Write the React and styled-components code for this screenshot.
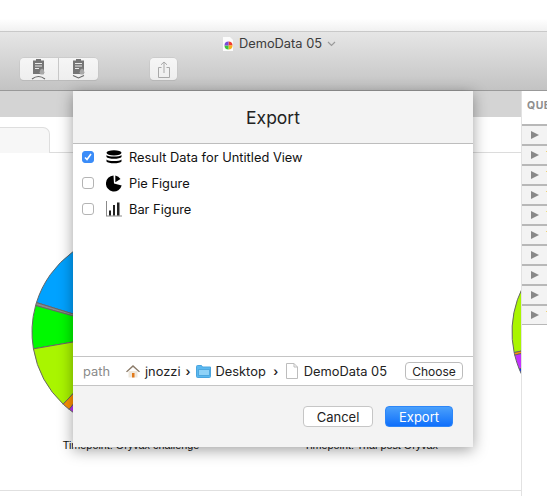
import React from 'react';
import styled, { createGlobalStyle } from 'styled-components';

const GlobalStyle = createGlobalStyle`
  html, body {
    margin: 0;
    padding: 0;
    background: #fff;
  }

  body {
    font-family: Inter, "Liberation Sans", sans-serif;
    color: #1c1c1c;
  }
`;

const LEFT_PIE = [
  { from: 0, to: 72.7, color: '#00a2ff' },
  { from: 72.7, to: 74.5, color: '#8a8a8a' },
  { from: 74.5, to: 99.8, color: '#00f900' },
  { from: 99.8, to: 136.8, color: '#a9f500' },
  { from: 136.8, to: 141.4, color: '#ff9300' },
  { from: 141.4, to: 147, color: '#c331ff' },
  { from: 147, to: 360, color: '#0433ff' },
];

const MIDDLE_PIE = [
  { from: 0, to: 80, color: '#00a2ff' },
  { from: 80, to: 140, color: '#a9f500' },
  { from: 140, to: 360, color: '#0433ff' },
];

const RIGHT_PIE = [
  { from: 0, to: 40, color: '#00a2ff' },
  { from: 40, to: 102, color: '#a9f500' },
  { from: 102, to: 103.5, color: '#ff9300' },
  { from: 103.5, to: 112, color: '#c331ff' },
  { from: 112, to: 360, color: '#0433ff' },
];

// angles run counter clockwise, starting at the top of the circle
const slicePath = (from, to) => {
  const point = (deg) => {
    const rad = (deg * Math.PI) / 180;
    return `${(100 - 99 * Math.sin(rad)).toFixed(2)} ${(100 - 99 * Math.cos(rad)).toFixed(2)}`;
  };
  const large = to - from > 180 ? 1 : 0;
  return `M100 100 L${point(from)} A99 99 0 ${large} 0 ${point(to)} Z`;
};

const Pie = ({ slices }) => (
  <svg width="200" height="200" viewBox="0 0 200 200">
    {slices.map((s) => (
      <path key={s.from} d={slicePath(s.from, s.to)} fill={s.color} stroke="#666" strokeWidth="1" />
    ))}
  </svg>
);

const ClipboardIcon = ({ down }) => (
  <svg width="16" height="22" viewBox="0 0 16 22">
    <path d="M2 2.500h3V1h5v1.500h3V16H2z" fill="#757575" />
    <path d="M4 5h7v1H4zM4 7.500h7v1H4zM4 10h4v1H4z" fill="#e8e8e8" />
    <path d="M9.500 11.500l1.500-1 1.500 1 1 3-1 2h-3l-1-2z" fill="#a8a8a8" />
    {down ? (
      <path d="M2 17.500 7.500 20 13 17.500" fill="none" stroke="#666" strokeWidth="1.100" />
    ) : (
      <path d="M1 21Q7.500 16 14 21" fill="none" stroke="#666" strokeWidth="1.100" />
    )}
  </svg>
);

const ShareIcon = () => (
  <svg width="12" height="17" viewBox="0 0 12 17" fill="none" stroke="#a9a9a9" strokeWidth="1">
    <path d="M3.500 6.500H.5v10h11v-10h-3" />
    <path d="M6 12V1M3 3.800 6 1l3 2.800" />
  </svg>
);

const DocColorIcon = () => (
  <svg width="12" height="14" viewBox="0 0 12 14">
    <path d="M1 0h7l3 3v11H1z" fill="#fbfbfb" />
    <path d="M6.500 4.500a4 4 0 0 1 4 4h-4z" fill="#f03b2e" />
    <path d="M10.500 8.500a4 4 0 0 1-4 4v-4z" fill="#f6b21b" />
    <path d="M6.500 12.500a4 4 0 0 1-4-4h4z" fill="#3ec23a" />
    <path d="M2.500 8.500a4 4 0 0 1 4-4v4z" fill="#7a4bd8" />
  </svg>
);

const DatabaseIcon = () => (
  <svg width="16" height="14" viewBox="0 0 16 14">
    <ellipse cx="8" cy="2.800" rx="7.500" ry="2.600" fill="#000" />
    <path d="M.5 5c1.500 2 13.500 2 15 0v2c-1.500 2.400-13.500 2.400-15 0z" fill="#000" />
    <path d="M.5 9.500c1.500 2 13.500 2 15 0v2c-1.500 2.400-13.500 2.400-15 0z" fill="#000" />
  </svg>
);

const PieIcon = () => (
  <svg width="16" height="17" viewBox="0 0 16 17">
    <path d="M8 8.500 15.700 10.500A8 8 0 1 1 7.500.5z" fill="#000" />
    <path d="M9.300.6A8 8 0 0 1 14.500 4L9.300 7.200z" fill="#000" />
  </svg>
);

const BarIcon = () => (
  <svg width="16" height="16" viewBox="0 0 16 16">
    <path d="M0 0h1v14.500h16v1H0z" fill="#8a8a8a" />
    <path d="M3 9.500h2v5H3zM7 4h2v10.500H7zM11 1.500h2.500v13H11z" fill="#222" />
  </svg>
);

const HomeIcon = () => (
  <svg width="14" height="14" viewBox="0 0 14 14">
    <path d="M2.500 7h9v6.500h-9z" fill="#efe7da" />
    <path d="M6 9h2.500v4.500H6z" fill="#e0791b" />
    <path d="M0 7.500 7 1l7 6.500-1 .7L7 3 1 8.200z" fill="#8a7a68" />
  </svg>
);

const FolderIcon = () => (
  <svg width="16" height="14" viewBox="0 0 16 14">
    <path d="M.5 2.500a1 1 0 0 1 1-1h4l1 1.500h8v9.500a1 1 0 0 1-1 1h-12a1 1 0 0 1-1-1z" fill="#5ab8f0" stroke="#4aa5de" />
    <path d="M2.500 5.500h11v6h-11z" fill="#8fd2f7" stroke="#3d9bd6" strokeWidth=".7" />
  </svg>
);

const FileIcon = () => (
  <svg width="12" height="16" viewBox="0 0 12 16">
    <path d="M.5.5h7.500l3.500 3.500v11.500H.5z" fill="#fff" stroke="#bdbdbd" />
    <path d="M8 .5V4h3.500" fill="none" stroke="#bdbdbd" />
  </svg>
);

const Page = styled.div`
  position: relative;
  width: 547px;
  height: 496px;
  overflow: hidden;
  background: #fff;
`;

const TopStrip = styled.div`
  height: 31px;
  background: linear-gradient(#fff 60%, #f1f1f1);
`;

const Toolbar = styled.div`
  height: 58px;
  border-top: 1px solid #c9c9c9;
  border-bottom: 1px solid #999;
  background: linear-gradient(#e6e6e6, #c3c3c3);
  display: flex;
  flex-direction: column;
`;

const TitleRow = styled.div`
  height: 23px;
  display: flex;
  align-items: center;
  justify-content: center;
  gap: 5px;
  font-size: 12.850px;
  color: #3c3c3c;
  padding-left: 11px;
  margin-bottom: 3px;
`;

const Chevron = styled.svg`
  width: 9px;
  height: 6px;
  fill: none;
  stroke: #9a9a9a;
  stroke-width: 1.200;
`;

const ButtonRow = styled.div`
  display: flex;
  padding-left: 20px;
  gap: 52px;
`;

const ButtonGroup = styled.div`
  display: flex;
  height: 22px;
  border-radius: 4px;
  background: linear-gradient(#f6f6f6, #eeeeee);
  box-shadow: 0 0 0 .5px #c2c2c2, 0 1px 0 #b4b4b4;
`;

const ToolButton = styled.div`
  width: ${(p) => p.$width}px;
  display: flex;
  align-items: center;
  justify-content: center;
  & + & {
    border-left: 1px solid #c8c8c8;
  }
`;

const Workspace = styled.div`
  display: flex;
  height: 406px;
`;

const Main = styled.div`
  width: 521px;
  flex: none;
  overflow: hidden;
  display: flex;
  flex-direction: column;
`;

const TabBar = styled.div`
  height: 26px;
  flex: none;
  background: #d4d4d4;
`;

const TabStrip = styled.div`
  height: 36px;
  flex: none;
  box-sizing: border-box;
  padding-top: 10px;
  border-bottom: 1px solid #dcdcdc;
`;

const Tab = styled.div`
  width: 50px;
  height: 26px;
  box-sizing: border-box;
  background: #f7f7f7;
  border: 1px solid #dedede;
  border-width: 1px 1px 0 0;
  border-top-right-radius: 7px;
`;

const Charts = styled.div`
  display: flex;
  flex: none;
  width: 760px;
  height: 338px;
  box-sizing: border-box;
  padding: 79px 0 0 11px;
  border-bottom: 1px solid #e0e0e0;
`;

const Chart = styled.figure`
  margin: 0;
  width: 240px;
  flex: none;
  display: flex;
  flex-direction: column;
  align-items: center;
  gap: 7px;
  font-size: 10.800px;
  color: #111;
  font-family: "Liberation Sans", sans-serif;
  white-space: nowrap;
`;

const Side = styled.aside`
  flex: 1;
  border-left: 1px solid #e2e2e2;
  overflow: hidden;
`;

const SideTitle = styled.div`
  height: 33px;
  box-sizing: border-box;
  display: flex;
  align-items: center;
  padding: 0 0 4px 5px;
  font-size: 10.500px;
  font-weight: 700;
  color: #8e8e8e;
  letter-spacing: .5px;
`;

const QueueRow = styled.div`
  height: 18px;
  border-top: 2px solid #b8b8b8;
  background: #f3f3f3;
  display: flex;
  align-items: center;
  padding-left: 9px;
  gap: 7px;
  font-size: 10px;
  white-space: nowrap;
  color: ${(p) => p.$color};
  &:last-child {
    border-bottom: 1px solid #b8b8b8;
  }
`;

const Triangle = styled.span`
  width: 0;
  height: 0;
  flex: none;
  border-left: 8px solid #888;
  border-top: 4.500px solid transparent;
  border-bottom: 4.500px solid transparent;
`;

const Dialog = styled.section`
  position: absolute;
  left: 73px;
  top: 91px;
  width: 400px;
  height: 356px;
  display: flex;
  flex-direction: column;
  background: #f3f3f3;
  box-shadow: 0 3px 14px rgba(0, 0, 0, .38);
`;

const DialogTitle = styled.h2`
  margin: 0;
  height: 52px;
  flex: none;
  display: flex;
  align-items: center;
  justify-content: center;
  font-size: 17.500px;
  font-weight: 400;
  color: #222;
  border-bottom: 1px solid #bdbdbd;
`;

const ExportList = styled.div`
  flex: 1;
  background: #fff;
  display: flex;
  flex-direction: column;
`;

const ExportRow = styled.label`
  height: 26px;
  display: flex;
  align-items: center;
  padding-left: 9px;
  font-size: 12.850px;
  color: #111;
`;

const Check = styled.span`
  width: 12px;
  height: 12px;
  border-radius: 3px;
  box-sizing: border-box;
  display: flex;
  align-items: center;
  justify-content: center;
  background: ${(p) => (p.$checked ? '#3b8cf8' : '#fff')};
  border: 1px solid ${(p) => (p.$checked ? '#3b8cf8' : '#b4b4b4')};
`;

const RowIcon = styled.span`
  width: 16px;
  display: flex;
  justify-content: center;
  margin: 0 7px 0 12px;
`;

const PathRow = styled.div`
  height: 30px;
  flex: none;
  box-sizing: border-box;
  background: #fff;
  border-top: 1px solid #c4c4c4;
  border-bottom: 1px solid #c4c4c4;
  display: flex;
  align-items: center;
  padding: 0 10px;
  font-size: 12.850px;
  color: #222;
`;

const PathLabel = styled.span`
  color: #8a8a8a;
  width: 43px;
`;

const Crumb = styled.span`
  display: flex;
  align-items: center;
  gap: ${(p) => p.$gap || 5}px;
`;

const Separator = styled.span`
  margin: 0 ${(p) => p.$space}px;
  font-size: 12px;
  font-weight: 600;
`;

const SmallButton = styled.button`
  margin-left: auto;
  width: 58px;
  height: 18px;
  padding: 0;
  background: #fff;
  border: 1px solid #bcbcbc;
  border-radius: 4px;
  font: 12px Inter, "Liberation Sans", sans-serif;
  color: #222;
`;

const Footer = styled.div`
  height: 61px;
  flex: none;
  box-sizing: border-box;
  display: flex;
  justify-content: flex-end;
  gap: 12px;
  padding: 20px 20px 0 0;
`;

const DialogButton = styled.button`
  width: ${(p) => (p.$primary ? 68 : 70)}px;
  height: 21px;
  padding: 0;
  border-radius: 4px;
  font: 13px Inter, "Liberation Sans", sans-serif;
  color: ${(p) => (p.$primary ? '#fff' : '#222')};
  background: ${(p) => (p.$primary ? 'linear-gradient(#4aa0fb, #0f6ffb)' : '#fff')};
  border: 1px solid ${(p) => (p.$primary ? '#2d86f8' : '#c6c6c6')};
`;

const QUEUE = ['#f3f3f3', '#e8a33c', '#e8a33c', '#e8a33c', '#e8c24c', '#e8a33c', '#f3f3f3', '#f3f3f3', '#f3f3f3', '#e8a33c'];

const EXPORTS = [
  { label: 'Result Data for Untitled View', icon: <DatabaseIcon />, checked: true },
  { label: 'Pie Figure', icon: <PieIcon /> },
  { label: 'Bar Figure', icon: <BarIcon /> },
];

const App = () => {
  return (
    <Page>
      <GlobalStyle />
      <TopStrip />
      <Toolbar>
        <TitleRow>
          <DocColorIcon />
          <span>DemoData 05</span>
          <Chevron viewBox="0 0 9 6"><path d="M1 1l3.500 3.500L8 1" /></Chevron>
        </TitleRow>
        <ButtonRow>
          <ButtonGroup>
            <ToolButton $width={38}><ClipboardIcon /></ToolButton>
            <ToolButton $width={39}><ClipboardIcon down /></ToolButton>
          </ButtonGroup>
          <ButtonGroup>
            <ToolButton $width={27}><ShareIcon /></ToolButton>
          </ButtonGroup>
        </ButtonRow>
      </Toolbar>
      <Workspace>
        <Main>
          <TabBar />
          <TabStrip><Tab /></TabStrip>
          <Charts>
            <Chart><Pie slices={LEFT_PIE} /><figcaption>Timepoint: Oryvax challenge</figcaption></Chart>
            <Chart><Pie slices={MIDDLE_PIE} /><figcaption>Timepoint: Trial post Oryvax</figcaption></Chart>
            <Chart><Pie slices={RIGHT_PIE} /><figcaption>Timepoint: Final</figcaption></Chart>
          </Charts>
        </Main>
        <Side>
          <SideTitle>QUEUE</SideTitle>
          {QUEUE.map((color, i) => (
            <QueueRow key={i} $color={color}><Triangle /><span>Trial</span></QueueRow>
          ))}
        </Side>
      </Workspace>
      <Dialog>
        <DialogTitle>Export</DialogTitle>
        <ExportList>
          {EXPORTS.map((item) => (
            <ExportRow key={item.label}>
              <Check $checked={item.checked}>
                {item.checked && (
                  <svg width="8" height="8" viewBox="0 0 8 8" fill="none" stroke="#fff" strokeWidth="1.600">
                    <path d="M1 4.500 3 6.500 7 1" />
                  </svg>
                )}
              </Check>
              <RowIcon>{item.icon}</RowIcon>
              {item.label}
            </ExportRow>
          ))}
        </ExportList>
        <PathRow>
          <PathLabel>path</PathLabel>
          <Crumb><HomeIcon />jnozzi</Crumb>
          <Separator $space={5}>›</Separator>
          <Crumb $gap={4}><FolderIcon />Desktop</Crumb>
          <Separator $space={7.5}>›</Separator>
          <Crumb $gap={6}><FileIcon />DemoData 05</Crumb>
          <SmallButton>Choose</SmallButton>
        </PathRow>
        <Footer>
          <DialogButton>Cancel</DialogButton>
          <DialogButton $primary>Export</DialogButton>
        </Footer>
      </Dialog>
    </Page>
  );
};

export default App;
